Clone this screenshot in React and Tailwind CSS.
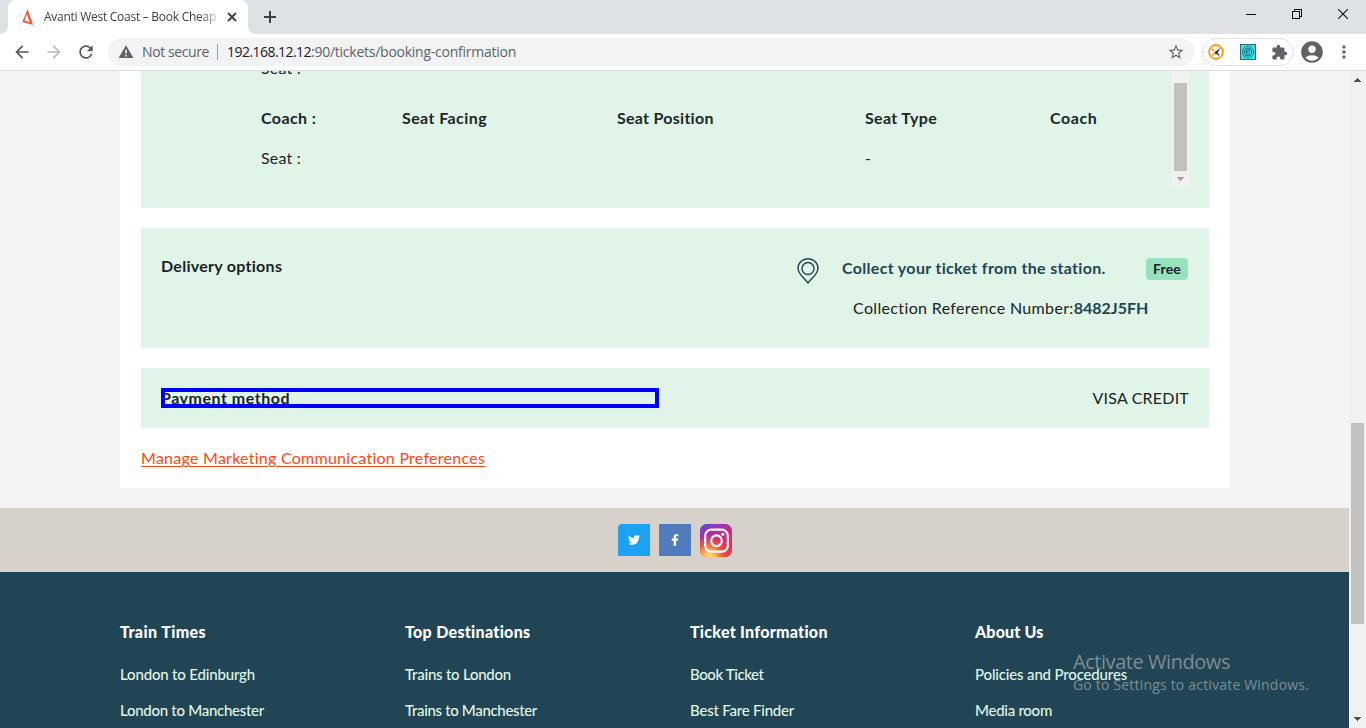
import React from "react";
import { FaTwitter, FaFacebookF } from "react-icons/fa";
import { MdExtension, MdAccountCircle, MdMoreVert, MdStarBorder, MdArrowBack, MdArrowForward, MdRefresh } from "react-icons/md";

const panel = "bg-[#e0f5e7]";

function Arrow({ down, className }) {
  return (
    <svg width="7" height="4" viewBox="0 0 7 4" shapeRendering="crispEdges" className={className} fill="currentColor">
      {down ? <path d="M0 0h7v1H0zM1 1h5v1H1zM2 2h3v1H2zM3 3h1v1H3z" /> : <path d="M3 0h1v1H3zM2 1h3v1H2zM1 2h5v1H1zM0 3h7v1H0z" />}
    </svg>
  );
}

function TabStrip() {
  return (
    <div className="flex h-[34px] bg-[#dee1e6]">
      <div className="flex w-2 items-end bg-white"><div className="h-full w-2 rounded-br-lg bg-[#dee1e6]" /></div>
      <div className="bg-[#dee1e6]">
        <div className="flex h-[34px] w-[240px] items-center rounded-t-lg bg-white pl-3">
          <svg width="16" height="16" viewBox="0 0 16 16" className="mr-2 shrink-0">
            <path d="M7.5.3 13.2 16 2.4 13zM6.9 5 4.5 11.6l5.3 1.6z" fill="#f9502a" fillRule="evenodd" />
          </svg>
          <div className="w-[173px] shrink-0 overflow-hidden pb-px whitespace-nowrap text-[12px] tracking-[-0.264px] text-[#3c4043] [mask-image:linear-gradient(to_right,black_155px,transparent_180px)]">
            Avanti West Coast – Book Cheap
          </div>
          <svg width="16" height="16" viewBox="0 0 16 16" className="ml-[7px] shrink-0" stroke="#3c4043" strokeWidth="1.8">
            <path d="M4 4l8 8M12 4l-8 8" />
          </svg>
        </div>
      </div>
      <div className="flex w-2 bg-white"><div className="h-full w-2 rounded-bl-lg bg-[#dee1e6]" /></div>
      <div className="flex flex-1 items-center pl-[7px]">
        <svg width="14" height="14" viewBox="0 0 14 14" stroke="#3c4043" strokeWidth="2">
          <path d="M7 1v12M1 7h12" />
        </svg>
      </div>
      <div className="flex h-[28px] items-center text-[#111]">
        <div className="flex w-[46px] justify-center"><svg width="10" height="10" shapeRendering="crispEdges"><path d="M0 5h10v1H0z" fill="currentColor" /></svg></div>
        <div className="flex w-[46px] justify-center">
          <svg width="10" height="10" viewBox="0 0 10 10" fill="none" stroke="currentColor" shapeRendering="crispEdges"><path d="M.5 2.5h7v7h-7zM2.5 2.5v-2h7v7h-2" /></svg>
        </div>
        <div className="flex w-[46px] justify-center">
          <svg width="10" height="10" viewBox="0 0 10 10" stroke="currentColor" strokeWidth="1.1"><path d="M0 0l10 10M10 0l-10 10" /></svg>
        </div>
      </div>
    </div>
  );
}

function Toolbar() {
  return (
    <div className="flex h-[37px] items-center border-b border-[#dadce0] bg-white pl-3">
      <MdArrowBack className="size-5 shrink-0 text-[#54585c]" />
      <MdArrowForward className="ml-3 size-5 shrink-0 text-[#babcbe]" />
      <MdRefresh className="ml-3 size-5 shrink-0 text-[#54585c]" />
      <div className="ml-3 flex h-7 w-[1086px] shrink-0 items-center rounded-full bg-[#f1f3f4] pl-[10px] text-[14px] whitespace-nowrap">
        <svg width="16" height="16" viewBox="0 0 16 16" className="mr-2"><path d="M8 1.2 15.4 14H.6z" fill="#5f6368" /><path d="M7.2 5.8h1.6v3.8H7.2zM7.2 10.8h1.6v1.6H7.2z" fill="#f1f3f4" /></svg>
        <span className="w-[67px] pb-0.5 tracking-[-0.4px] text-[#5f6368]">Not secure</span>
        <span className="mr-[9px] ml-[8px] h-4 w-px bg-[#9aa0a6]" />
        <span className="pb-0.5 tracking-[-0.545px] text-[#202124]">192.168.12.12</span>
        <span className="pb-0.5 tracking-[-0.25px] text-[#5f6368]">:90/tickets/booking-confirmation</span>
        <MdStarBorder className="mr-[9px] ml-auto size-[18px] text-[#5f6368]" />
      </div>
      <div className="ml-2 flex h-7 w-[92px] shrink-0 items-center rounded-full border border-[#dfe1e5] pl-[5px]">
        <svg width="16" height="16" viewBox="0 0 16 16" className="shrink-0">
          <circle cx="8" cy="8" r="7" fill="#fff" stroke="#f9a01b" strokeWidth="1.8" />
          <path d="M3.2 5.4c1.6-.4 2.4.8 3.6 1.8M3.6 11.4l5-3" stroke="#f9a01b" strokeWidth="1.6" fill="none" />
          <path d="M13 3.8 6.4 8.6l1.8 2z" fill="#222" />
          <path d="M8.8 8.6l2.4 2.8" stroke="#222" strokeWidth="1.2" />
        </svg>
        <svg width="16" height="16" viewBox="0 0 16 16" className="ml-4 shrink-0" fill="none" stroke="#17616d" strokeWidth=".9">
          <rect x=".5" y=".5" width="15" height="15" fill="#3fdde6" />
          <circle cx="8" cy="8" r="5.7" strokeDasharray="2.4 .6" />
          <circle cx="8" cy="8" r="3.9" />
          <path d="M6 8.2l4-1.2c-.6-2-4-1.6-4.1 1 0 2.4 2.8 2.6 4 1.4" />
        </svg>
        <MdExtension className="ml-[15px] size-[17px] shrink-0 text-[#5f6368]" />
      </div>
      <MdAccountCircle className="ml-[5px] size-[26px] shrink-0 text-[#5f6368]" />
      <MdMoreVert className="ml-[9px] size-5 shrink-0 text-[#5f6368]" />
    </div>
  );
}

function Seats() {
  return (
    <section className={"flex h-[137px] justify-between pr-5 pl-[120px] " + panel}>
      <div className="whitespace-nowrap text-[#212529]">
        <div className="-mt-[15px] h-[24px] leading-6 tracking-[0.207px]">Seat :</div>
        <div className="mt-[26px] flex h-6 leading-6 font-bold">
          <span className="w-[141px] tracking-[0.42px]">Coach :</span>
          <span className="w-[215px] tracking-[0.41px]">Seat Facing</span>
          <span className="w-[248px] tracking-[0.271px]">Seat Position</span>
          <span className="w-[185px] tracking-[0.34px]">Seat Type</span>
          <span className="tracking-[0.6px]">Coach</span>
        </div>
        <div className="mt-4 flex h-6 leading-6">
          <span className="w-[604px] tracking-[0.207px]">Seat :</span>
          <span>-</span>
        </div>
      </div>
      <div className="flex h-[117px] w-[17px] flex-col items-center bg-[#f1f1f1] pt-3">
        <div className="h-[88px] w-[13px] bg-[#c1c1c1]" />
        <Arrow down className="mt-[6px] text-[#a3a3a3]" />
      </div>
    </section>
  );
}

function Delivery() {
  return (
    <section className={"mt-5 flex h-[120px] justify-between pt-[26px] pr-[21px] pl-5 whitespace-nowrap " + panel}>
      <h3 className="h-6 leading-6 font-bold tracking-[0.28px] text-[#1c2226]">Delivery options</h3>
      <div className="flex w-[391px] flex-col">
        <div className="flex h-7 items-center">
          <svg width="22" height="26" viewBox="0 0 22 26" className="mt-[5px] shrink-0" fill="none" stroke="#214555" strokeWidth="1.4">
            <path d="M11 25C7.5 20.5 1 15.8 1 10.5a10 9.8 0 0 1 20 0C21 15.8 14.5 20.5 11 25z" strokeLinejoin="round" />
            <circle cx="11" cy="10.5" r="6" />
          </svg>
          <span className="ml-[23px] w-[304px] shrink-0 leading-6 font-bold tracking-[0.325px] text-[#214555]">Collect your ticket from the station.</span>
          <span className="mt-[2px] flex h-[22px] w-[42px] items-center justify-center rounded-[4px] bg-[#97e1be] pb-[2px] text-[14px] font-bold tracking-[0.168px] text-[#14232a]">Free</span>
        </div>
        <div className="mt-[14px] ml-[56px] leading-6">
          <span className="tracking-[0.352px] text-[#1c2226]">Collection Reference Number:</span>
          <span className="font-bold tracking-[-0.02px] text-[#214555]">8482J5FH</span>
        </div>
      </div>
    </section>
  );
}

function Instagram() {
  return (
    <svg width="32" height="33" viewBox="0 0 32 33">
      <defs>
        <linearGradient id="igBase" x1="0" y1="0" x2=".5" y2="1">
          <stop offset="0" stopColor="#4a54d4" />
          <stop offset=".3" stopColor="#a32db5" />
          <stop offset=".7" stopColor="#dc2a71" />
          <stop offset="1" stopColor="#e8384f" />
        </linearGradient>
        <radialGradient id="igGlow" cx=".28" cy="1.02" r=".75">
          <stop offset="0" stopColor="#ffe17a" />
          <stop offset=".3" stopColor="#fdb04b" />
          <stop offset=".62" stopColor="#f3563c" stopOpacity=".8" />
          <stop offset="1" stopColor="#e0305f" stopOpacity="0" />
        </radialGradient>
      </defs>
      <rect width="32" height="33" rx="6.5" fill="url(#igBase)" />
      <rect width="32" height="33" rx="6.5" fill="url(#igGlow)" />
      <g fill="none" stroke="#fff" strokeWidth="2.2">
        <rect x="5.2" y="5.7" width="22.6" height="22" rx="6" />
        <circle cx="16.5" cy="16.7" r="5.3" />
      </g>
      <circle cx="22.8" cy="10.3" r="1.5" fill="#fff" />
    </svg>
  );
}

function Column({ title, titleClass, children }) {
  return (
    <div className="w-[285px] shrink-0 whitespace-nowrap">
      <h4 className={"leading-6 font-black text-white " + titleClass}>{title}</h4>
      <ul className="mt-[12px] flex flex-col text-[15px] leading-[36px] font-medium text-[#e0f5e7]">{children}</ul>
    </div>
  );
}

function Footer() {
  return (
    <footer className="h-[156px] bg-[#214555] pt-12 pl-[120px]">
      <div className="flex">
        <Column title="Train Times" titleClass="tracking-[0.4px]">
          <li className="tracking-[-0.169px]">London to Edinburgh</li>
          <li className="tracking-[-0.276px]">London to Manchester</li>
        </Column>
        <Column title="Top Destinations" titleClass="tracking-[0.3px]">
          <li className="tracking-[-0.232px]">Trains to London</li>
          <li className="tracking-[-0.336px]">Trains to Manchester</li>
        </Column>
        <Column title="Ticket Information" titleClass="tracking-[0.277px]">
          <li className="tracking-[-0.408px]">Book Ticket</li>
          <li className="tracking-[-0.221px]">Best Fare Finder</li>
        </Column>
        <Column title="About Us" titleClass="tracking-[0.15px]">
          <li className="tracking-[-0.165px]">Policies and Procedures</li>
          <li className="tracking-[-0.274px]">Media room</li>
        </Column>
      </div>
    </footer>
  );
}

export default function App() {
  return (
    <div className="relative flex h-[728px] w-[1366px] flex-col overflow-hidden font-['Open_Sans',sans-serif]">
      <TabStrip />
      <Toolbar />
      <div className="flex h-[657px]">
        <div className="h-[657px] w-[1349px] overflow-hidden bg-[#f4f4f4] font-[Lato,sans-serif] text-base">
          <main className="ml-[120px] h-[417px] w-[1110px] overflow-hidden bg-white pr-[21px] pl-[21px]">
            <Seats />
            <Delivery />
            <section className={"mt-5 flex h-[60px] items-center justify-between px-5 whitespace-nowrap " + panel}>
              <div className="relative flex h-5 w-[498px] items-center">
                <h3 className="leading-6 font-bold tracking-[0.515px] text-[#1c2226]">Payment method</h3>
                <div className="absolute inset-0 border-4 border-[#0000ff]" />
              </div>
              <span className="-mt-px tracking-[0.204px] text-[#1c2226]">VISA CREDIT</span>
            </section>
            <a className="mt-[18px] block leading-6 tracking-[0.26px] whitespace-nowrap text-[#ff4713] underline underline-offset-2">Manage Marketing Communication Preferences</a>
          </main>
          <div className="mt-5 flex h-16 justify-center gap-[9px] bg-[#d6d1ca] pt-4">
            <div className="flex size-8 items-center justify-center rounded-tl-sm bg-[#1da1f2]"><FaTwitter className="size-3 text-white" /></div>
            <div className="flex size-8 items-center justify-center rounded-[1px] bg-[#507cbe]"><FaFacebookF className="size-3 text-white" /></div>
            <Instagram />
          </div>
          <Footer />
        </div>
        <div className="flex h-[657px] w-[17px] flex-col items-center bg-[#f1f1f1] pt-[7px]">
          <Arrow className="text-[#505050]" />
          <div className="mt-[341px] h-[201px] w-[13px] bg-[#c1c1c1]" />
          <Arrow down className="mt-[93px] text-[#505050]" />
        </div>
      </div>
      <div className="absolute top-[648px] left-[1073px] whitespace-nowrap text-[#8b979d]/90">
        <div className="text-[20px] leading-7 tracking-[-0.446px]">Activate Windows</div>
        <div className="text-[14px] leading-[18px] tracking-[0.189px]">Go to Settings to activate Windows.</div>
      </div>
    </div>
  );
}
